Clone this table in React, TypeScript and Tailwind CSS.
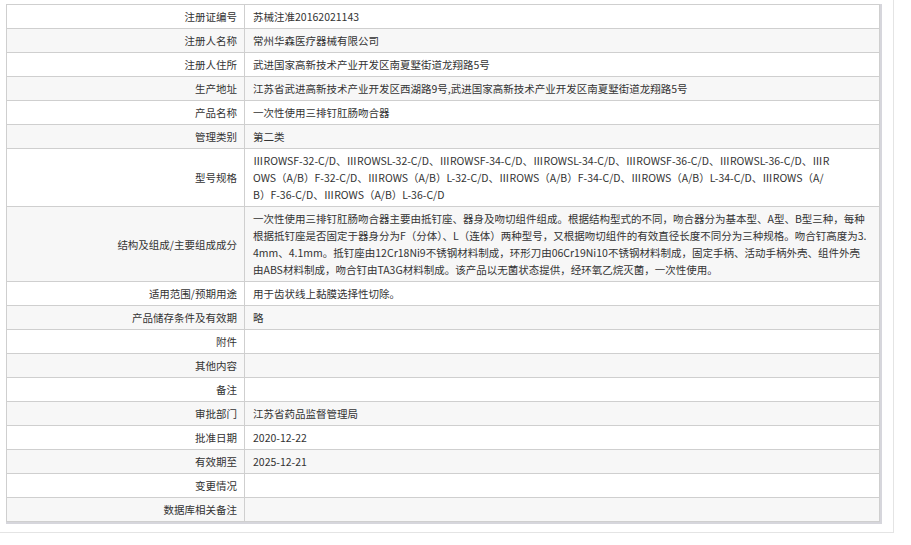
import React from "react";

type Row = { label: string; lines: string[] };

const rows: Row[] = [
  { label: "注册证编号", lines: ["苏械注准20162021143"] },
  { label: "注册人名称", lines: ["常州华森医疗器械有限公司"] },
  { label: "注册人住所", lines: ["武进国家高新技术产业开发区南夏墅街道龙翔路5号"] },
  { label: "生产地址", lines: ["江苏省武进高新技术产业开发区西湖路9号,武进国家高新技术产业开发区南夏墅街道龙翔路5号"] },
  { label: "产品名称", lines: ["一次性使用三排钉肛肠吻合器"] },
  { label: "管理类别", lines: ["第二类"] },
  {
    label: "型号规格",
    lines: [
      "ⅢROWSF-32-C/D、ⅢROWSL-32-C/D、ⅢROWSF-34-C/D、ⅢROWSL-34-C/D、ⅢROWSF-36-C/D、ⅢROWSL-36-C/D、ⅢR",
      "OWS（A/B）F-32-C/D、ⅢROWS（A/B）L-32-C/D、ⅢROWS（A/B）F-34-C/D、ⅢROWS（A/B）L-34-C/D、ⅢROWS（A/",
      "B）F-36-C/D、ⅢROWS（A/B）L-36-C/D",
    ],
  },
  {
    label: "结构及组成/主要组成成分",
    lines: [
      "一次性使用三排钉肛肠吻合器主要由抵钉座、器身及吻切组件组成。根据结构型式的不同，吻合器分为基本型、A型、B型三种，每种",
      "根据抵钉座是否固定于器身分为F（分体）、L（连体）两种型号，又根据吻切组件的有效直径长度不同分为三种规格。吻合钉高度为3.",
      "4mm、4.1mm。抵钉座由12Cr18Ni9不锈钢材料制成，环形刀由06Cr19Ni10不锈钢材料制成，固定手柄、活动手柄外壳、组件外壳",
      "由ABS材料制成，吻合钉由TA3G材料制成。该产品以无菌状态提供，经环氧乙烷灭菌，一次性使用。",
    ],
  },
  { label: "适用范围/预期用途", lines: ["用于齿状线上黏膜选择性切除。"] },
  { label: "产品储存条件及有效期", lines: ["略"] },
  { label: "附件", lines: [] },
  { label: "其他内容", lines: [] },
  { label: "备注", lines: [] },
  { label: "审批部门", lines: ["江苏省药品监督管理局"] },
  { label: "批准日期", lines: ["2020-12-22"] },
  { label: "有效期至", lines: ["2025-12-21"] },
  { label: "变更情况", lines: [] },
  { label: "数据库相关备注", lines: [] },
];

export default function App() {
  return (
    <div
      className="w-[894px] h-[533px] border-r border-b border-[#e4e4e4] bg-white pt-[4px] pl-[6px] text-[10.5px] leading-[17px] text-[#333]"
      style={{ fontFamily: '"Noto Sans CJK SC", "Noto Sans", sans-serif' }}
    >
      <div className="w-[876px] border-r-2 border-b-2 border-[#d6d6dc]">
        <table className="w-full border-collapse table-fixed">
          <colgroup>
            <col className="w-[238px]" />
            <col />
          </colgroup>
          <tbody>
            {rows.map((r, i) => (
              <tr key={r.label} className={i % 2 === 1 ? "bg-[#f7f7f7]" : "bg-white"}>
                <td className="border border-[#cfcfcf] text-right align-middle pr-[7px] py-[3px] whitespace-nowrap">
                  {r.label}
                </td>
                <td className="border border-[#cfcfcf] align-middle pl-[8px] pr-[4px] py-[3px]">
                  {r.lines.length === 0 ? (
                    <div className="h-[17px]" />
                  ) : (
                    r.lines.map((l, j) => (
                      <div key={j} className="whitespace-nowrap">
                        {l}
                      </div>
                    ))
                  )}
                </td>
              </tr>
            ))}
          </tbody>
        </table>
      </div>
    </div>
  );
}
